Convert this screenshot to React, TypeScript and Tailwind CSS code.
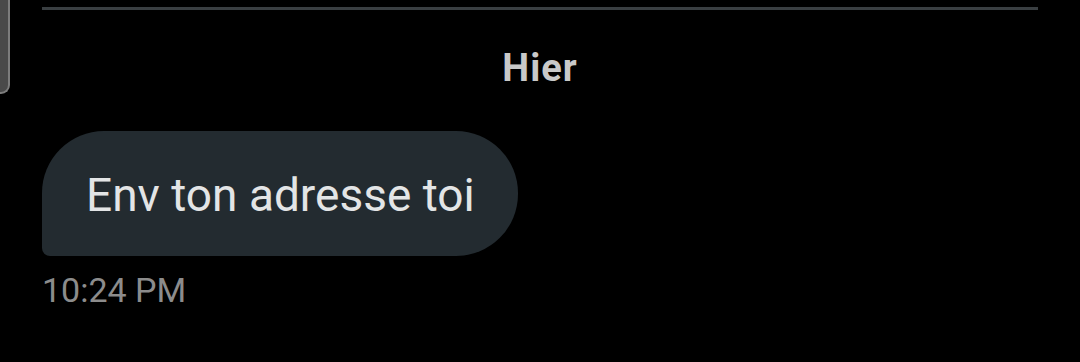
export default function App() {
  return (
    <div className="relative w-[1080px] h-[362px] bg-black overflow-hidden" style={{ fontFamily: "Roboto, 'Noto Sans', sans-serif" }}>
      <div className="absolute left-0 top-0 w-[10px] h-[94px] bg-[#4a4a4a] border-r-2 border-b-2 border-[#7d7d7d] rounded-br-[9px]" />
      <div className="pl-[42px] pr-[42px] pt-[7px]">
        <div className="h-[3px] bg-[#3a3f42]" />
        <div className="flex justify-center pt-[36px]">
          <span className="text-[38px] leading-[44px] font-bold tracking-[1px] text-[#c9c9c9]">Hier</span>
        </div>
        <div className="pt-[41px]">
          <div className="inline-flex items-center h-[125px] pl-[44px] pr-[43px] bg-[#232b30] rounded-[62px] rounded-bl-[8px]">
            <span className="text-[46px] leading-[54px] text-[#e3e5e6] pt-[2px]">Env ton adresse toi</span>
          </div>
        </div>
        <div className="pt-[14px]">
          <span className="text-[34px] leading-[40px] text-[#8c8c8c]">10:24 PM</span>
        </div>
      </div>
    </div>
  );
}
